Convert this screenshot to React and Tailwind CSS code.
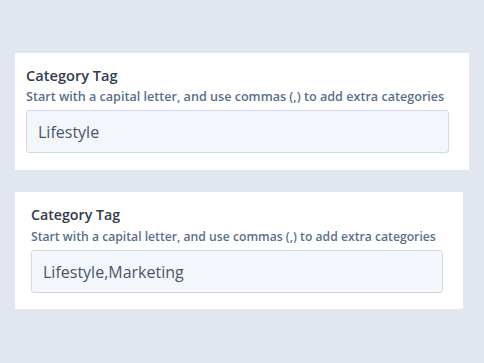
export default function App() {
  const font = { fontFamily: "'Open Sans', 'Noto Sans', sans-serif" };
  const Card = ({ value, cls, inputCls, labelCls, helpCls }) => (
    <div className={`bg-white flex flex-col ${cls}`}>
      <div className={`leading-5 font-semibold text-[#323c4c] ${labelCls}`}>Category Tag</div>
      <div className={`mt-[4px] leading-4 font-semibold text-[#5a6f8c] whitespace-nowrap ${helpCls}`}>
        Start with a capital letter, and use commas (,) to add extra categories
      </div>
      <div className={`mt-[5px] h-[43px] rounded-[3px] border border-[#d3d9e2] bg-[#f3f6fa] flex items-center px-[11px] text-[16px] text-[#4a5568] ${inputCls}`}>
        {value}
      </div>
    </div>
  );
  return (
    <div style={font} className="w-[484px] h-[363px] bg-[#e2e7ef] pt-[53px] pl-[15px]">
      <Card
        value="Lifestyle"
        cls="w-[454px] h-[117px] pt-[12px] pl-[11px] pr-[20px]"
        inputCls="w-[423px]"
        labelCls="text-[14.6px]"
        helpCls="text-[12.6px]"
      />
      <div className="h-[22px]" />
      <Card
        value="Lifestyle,Marketing"
        cls="w-[448px] h-[117px] pt-[13px] pl-[16px] pr-[20px]"
        inputCls="w-[412px]"
        labelCls="text-[14.2px]"
        helpCls="text-[12.2px]"
      />
    </div>
  );
}
